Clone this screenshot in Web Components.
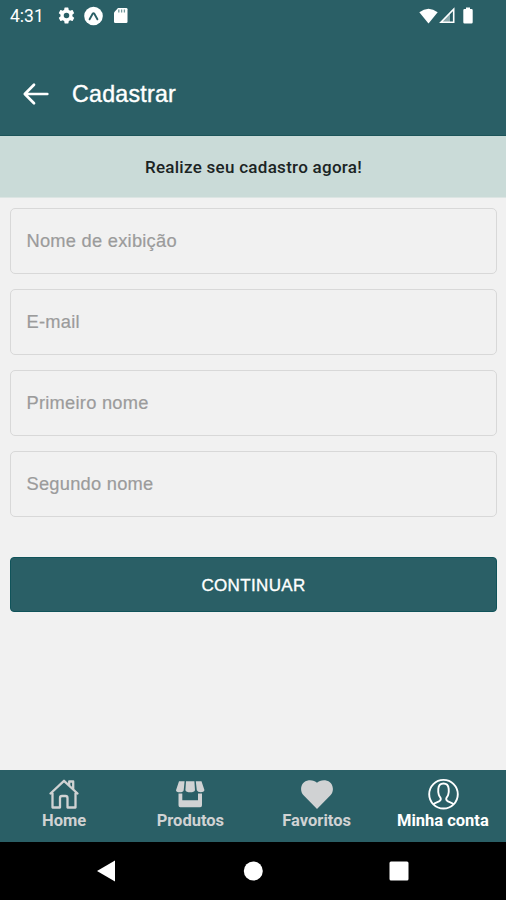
<!DOCTYPE html>
<html lang="pt-BR">
<head>
<meta charset="utf-8">
<title>Cadastrar</title>
<style>
  html, body { margin: 0; height: 100%; }
  body { background: #f1f1f1; overflow: hidden; }
</style>
</head>
<body>
<register-screen></register-screen>

<script>
// Build an element class from its styles and markup
function define(name, styles, html) {
  customElements.define(name, class extends HTMLElement {
    constructor() {
      super();
      this.attachShadow({ mode: "open" });
      this.shadowRoot.innerHTML = `<style>${styles}</style>${html}`;
    }
  });
}

define("status-bar", `
  :host {
    display: flex;
    justify-content: space-between;
    height: 31px;
    padding: 0 33px 0 10px;
    color: #fff;
    font: 17.5px/32px Roboto, sans-serif;
  }
  div { display: flex; align-items: center; }
  svg { display: block; fill: currentColor; }
  .time { width: 39px; }
  .left { gap: 8px; }
  .right { gap: 1px; }
  .battery { margin-left: 6px; }
`, `
  <div class="left">
    <span class="time"><slot></slot></span>
    <svg width="19" height="19" viewBox="0 0 24 24"><path d="M19.4 13a7.5 7.5 0 0 0 0-2l2.1-1.7c.2-.1.2-.4.1-.6l-2-3.5c-.1-.2-.4-.3-.6-.2l-2.5 1a7.3 7.3 0 0 0-1.7-1l-.4-2.6a.5.5 0 0 0-.5-.4h-4a.5.5 0 0 0-.5.4L9 5.1a7.7 7.7 0 0 0-1.7 1L4.900 5c-.2-.1-.5 0-.6.2l-2 3.500c-.1.2-.1.5.1.6L4.5 11a7.900 7.900 0 0 0 0 2l-2.100 1.700c-.2.1-.2.4-.1.6l2 3.500c.1.2.4.3.6.2l2.500-1c.5.4 1.100.7 1.700 1l.4 2.600c0 .2.2.4.5.4h4c.2 0 .5-.2.5-.4l.4-2.600a7.300 7.300 0 0 0 1.700-1l2.500 1c.2.1.5 0 .6-.2l2-3.500c.1-.2.1-.5-.1-.6L19.400 13zM12 15.500a3.500 3.500 0 1 1 0-7 3.500 3.500 0 0 1 0 7z"/></svg>
    <svg width="19" height="20" viewBox="0 0 19 20"><circle cx="9.5" cy="10" r="9.3"/><path d="M5.6 13.3 8.800 7.600q.7-1 1.400 0l3.200 5.700" fill="none" stroke="#2a5f66" stroke-width="1.9" stroke-linecap="round"/></svg>
    <svg style="margin-left:2px" width="15" height="17" viewBox="0 0 15 17"><path d="M5 1h8.200q1.300 0 1.300 1.300v12.400q0 1.300-1.300 1.300H2.300Q1 16 1 14.700V5.500z"/><path d="M5.800 2.500v3M8.600 2.500v3M11.400 2.500v3" stroke="#71989b" stroke-width="1.3"/></svg>
  </div>
  <div class="right">
    <svg width="19" height="16" viewBox="0 0 19 16"><path d="M.3 4.3Q9.500-2.800 18.700 4.300L9.500 15.500z"/></svg>
    <svg width="17" height="17" viewBox="0 0 17 17"><path d="M14.700 2.200v13H2z" fill="none" stroke="#fff" stroke-width="1.6"/><path d="M11 5.500v10H2z" opacity=".45"/></svg>
    <svg class="battery" width="10" height="17" viewBox="0 0 10 17"><path d="M3 .5h4v1.500h1.500q1.200 0 1.200 1.200v12q0 1.200-1.200 1.200h-7Q.3 16.400.3 15.200v-12Q.3 2 1.500 2H3z"/></svg>
  </div>
`);

define("app-header", `
  :host {
    display: flex;
    align-items: center;
    gap: 22px;
    height: 105px;
    padding: 21px 22px 0;
    box-sizing: border-box;
    border-bottom: 1px solid #1c5459;
    color: #fff;
    font: 23.2px/30px "Liberation Sans", Arial, sans-serif;
    letter-spacing: .25px;
    -webkit-text-stroke: .4px #fff;
  }
  svg { display: block; }
`, `
  <svg width="28" height="24" viewBox="0 0 28 24" fill="none" stroke="#fff" stroke-width="2.7" stroke-linecap="round" stroke-linejoin="round"><path d="M12 2.800 2.800 12l9.200 9.200M3.300 12h22"/></svg>
  <span><slot></slot></span>
`);

define("notice-bar", `
  :host {
    display: block;
    height: 61px;
    padding-left: 1px;
    background: #cadbd8;
    border-bottom: 1px solid #dce5e3;
    color: #1b2424;
    text-align: center;
    font: 500 17px/63px Roboto, sans-serif;
    letter-spacing: .28px;
  }
`, `<slot></slot>`);

define("text-field", `
  :host {
    display: flex;
    align-items: center;
    height: 66px;
    box-sizing: border-box;
    padding: 0 15.5px;
    border: 1px solid #d8d8d8;
    border-radius: 5px;
    color: #9b9b9b;
    font: 18.3px/24px "Liberation Sans", Arial, sans-serif;
    letter-spacing: .25px;
    -webkit-text-stroke: .2px #9b9b9b;
  }
`, `<slot></slot>`);

define("primary-button", `
  :host { display: block; }
  button {
    display: block;
    width: 100%;
    height: 55px;
    padding: 2px 0 0;
    background: #2a5f66;
    border: 1.5px solid #10535a;
    border-radius: 4px;
    color: #fff;
    font: 17px/24px "Liberation Sans", Arial, sans-serif;
    letter-spacing: .35px;
    -webkit-text-stroke: .35px #fff;
  }
`, `<button type="button"><slot></slot></button>`);

define("tab-item", `
  :host {
    display: flex;
    flex-direction: column;
    align-items: center;
    gap: 1px;
    color: #d0d2d3;
    font: 700 16.5px/20px Roboto, sans-serif;
    white-space: nowrap;
  }
  :host([active]) { color: #fff; }
  ::slotted(svg) { display: block; width: 32px; height: 32px; }
`, `<slot name="icon"></slot><span><slot></slot></span>`);

define("tab-bar", `
  :host {
    display: grid;
    grid-template-columns: repeat(4, 1fr);
    height: 72px;
    box-sizing: border-box;
    padding: 8px 0 0 1px;
    background: #2a5f66;
  }
`, `<slot></slot>`);

define("system-nav", `
  :host {
    display: flex;
    align-items: center;
    justify-content: center;
    gap: 126px;
    height: 58px;
    background: #000;
  }
  svg { display: block; fill: #fff; }
`, `
  <svg width="20" height="22" viewBox="0 0 20 22"><path d="M0 11 18 .5v21z"/></svg>
  <svg width="20" height="20" viewBox="0 0 20 20"><circle cx="10.3" cy="10" r="9.5"/></svg>
  <svg width="20" height="20" viewBox="0 0 20 20"><rect x=".5" y=".5" width="19" height="19" rx="1.5"/></svg>
`);

define("register-screen", `
  :host {
    display: flex;
    flex-direction: column;
    height: 900px;
    background: #f1f1f1;
  }
  header { background: #2a5f66; }
  main {
    flex: 1;
    display: flex;
    flex-direction: column;
    gap: 15px;
    padding: 10px 9px 0 10px;
  }
  primary-button { margin-top: 25px; }
`, `
  <header>
    <status-bar>4:31</status-bar>
    <app-header>Cadastrar</app-header>
  </header>
  <notice-bar>Realize seu cadastro agora!</notice-bar>
  <main>
    <text-field>Nome de exibição</text-field>
    <text-field>E-mail</text-field>
    <text-field>Primeiro nome</text-field>
    <text-field>Segundo nome</text-field>
    <primary-button>CONTINUAR</primary-button>
  </main>
  <tab-bar>
    <tab-item>
      <svg slot="icon" viewBox="0 0 32 32" fill="none" stroke="currentColor" stroke-width="2.3" stroke-linejoin="round" stroke-linecap="round"><path d="M4.500 15v14.500h7.500V20q0-2 2-2h3.500q2 0 2 2v9.500H27.500V15M2.500 15.500 16 2.800 29.500 15.500M21.200 7V3.500h4v7.200"/></svg>
      Home
    </tab-item>
    <tab-item>
      <svg slot="icon" viewBox="0 0 32 32" fill="currentColor"><path d="M5 3.200h5.600L9.700 12.300q-.5 2-4 2T2 12.300zM12 3.200h8.400l.6 9.100q-.8 2-4.800 2t-4.800-2zM21.800 3.200h5.700l3 9.100q-.5 2-3.700 2t-4-2z"/><path d="M4.500 15.500h3.800v6.800H24v-6.800h4v11.800q0 1.900-1.800 1.900H6.300q-1.800 0-1.800-1.900z"/></svg>
      Produtos
    </tab-item>
    <tab-item>
      <svg slot="icon" viewBox="0 0 32 32" fill="currentColor"><path d="M16 31 2.300 17C-2 12 0 3.200 7.800 2.200c3.500-.4 6.400 1 8.200 2.500 1.800-1.500 4.700-2.900 8.200-2.500C32 3.200 34 12 29.700 17z"/></svg>
      Favoritos
    </tab-item>
    <tab-item active>
      <svg slot="icon" viewBox="0 0 32 32" fill="none" stroke="currentColor" stroke-width="1.9" stroke-linejoin="round"><circle cx="16.500" cy="16.200" r="14.300"/><path d="M6.500 26.300c2-2.700 7.300-2 7.300-5.300 0-1.500-1.300-2-2-4.200-.7-2-.7-4-.5-6 .3-3.500 2.200-5.300 5.200-5.300s4.900 1.800 5.200 5.300c.2 2 .2 4-.5 6-.7 2.200-2 2.700-2 4.200 0 3.300 5.300 2.600 7.300 5.300"/></svg>
      Minha conta
    </tab-item>
  </tab-bar>
  <system-nav></system-nav>
`);
</script>
</body>
</html>
